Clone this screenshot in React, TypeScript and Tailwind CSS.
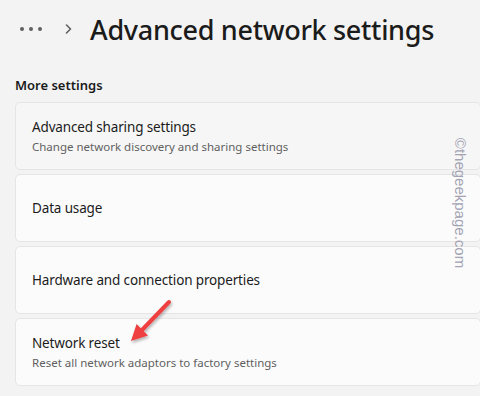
import React from "react";

const font = { fontFamily: '"Segoe UI", "Noto Sans", "Open Sans", sans-serif' };

function Card({ title, sub, bg = "bg-[#fbfbfb]" }: { title: string; sub?: string; bg?: string }) {
  return (
    <div className={`h-[68px] rounded-[5px] border border-[#e5e5e5] ${bg} flex flex-col justify-center pl-4 -mr-4`}>
      <div className="text-[13.5px] leading-[19px] tracking-[-0.15px] text-[#1b1b1b]">{title}</div>
      {sub && <div className="text-[11.5px] leading-[16px] text-[#5f5f5f] mt-[2px]">{sub}</div>}
    </div>
  );
}

export default function App() {
  return (
    <div className="relative w-[480px] h-[396px] bg-[#f3f3f3] overflow-hidden" style={font}>
      <div className="flex items-center h-[58px] pl-[19px]">
        <svg width="24" height="6" viewBox="0 0 24 6" className="text-[#606060]">
          <circle cx="3" cy="3" r="2" fill="currentColor" />
          <circle cx="12" cy="3" r="2" fill="currentColor" />
          <circle cx="21" cy="3" r="2" fill="currentColor" />
        </svg>
        <svg width="8" height="10" viewBox="0 0 8 10" className="ml-[22px] text-[#606060]">
          <path d="M1.5 1 L5.5 5 L1.5 9" fill="none" stroke="currentColor" strokeWidth="1.6" strokeLinecap="round" strokeLinejoin="round" />
        </svg>
        <h1 className="ml-[17px] text-[27px] leading-[34px] font-medium text-[#1b1b1b] tracking-[-0.3px] mt-[2px]">
          Advanced network settings
        </h1>
      </div>
      <div className="px-[15px]">
        <div className="mt-[17px] text-[13px] leading-[20px] font-semibold text-[#1b1b1b]">More settings</div>
        <div className="mt-[7px] flex flex-col gap-[4px]">
          <Card title="Advanced sharing settings" sub="Change network discovery and sharing settings" bg="bg-[#f6f6f6]" />
          <Card title="Data usage" />
          <Card title="Hardware and connection properties" />
          <Card title="Network reset" sub="Reset all network adaptors to factory settings" />
        </div>
      </div>
      <div
        className="absolute left-[460px] top-[203px] text-[15px] text-[#a3a3b3] whitespace-nowrap"
        style={{ fontFamily: '"Liberation Sans", Arial, sans-serif', transform: "translate(-50%, -50%) rotate(90deg)" }}
      >
        ©thegeekpage.com
      </div>
      <svg className="absolute left-0 top-0" width="480" height="396" viewBox="0 0 480 396" style={{ pointerEvents: "none" }}>
        <defs>
          <filter id="sh" x="-50%" y="-50%" width="200%" height="200%">
            <feDropShadow dx="1" dy="2" stdDeviation="1.5" floodColor="#000" floodOpacity="0.3" />
          </filter>
        </defs>
        <g filter="url(#sh)">
          <line x1="169" y1="302" x2="142" y2="330" stroke="#ee3f3f" strokeWidth="4" strokeLinecap="round" />
          <polygon points="131,341 136.6,324 148,335.4" fill="#ee3f3f" />
        </g>
      </svg>
    </div>
  );
}
